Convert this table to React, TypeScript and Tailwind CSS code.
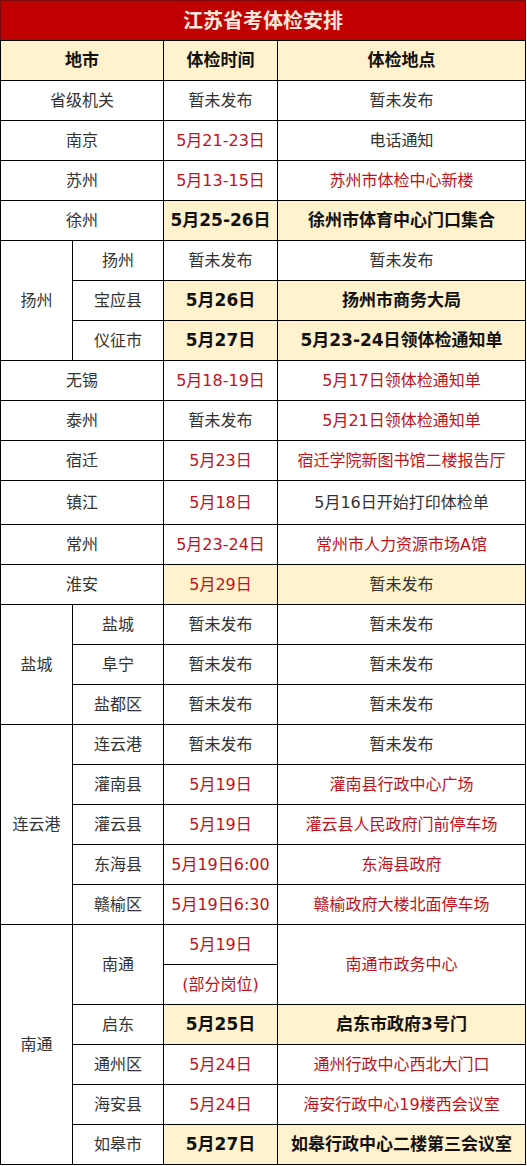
import React from 'react';

type Tone = 'gray' | 'red' | 'bold';

interface CellProps {
  children: React.ReactNode;
  tone?: Tone;
  hl?: boolean;
  className?: string;
}

function Cell({ children, tone = 'gray', hl = false, className = '' }: CellProps) {
  const toneClass =
    tone === 'red'
      ? 'text-[#c0121b] text-[16px]'
      : tone === 'bold'
        ? 'text-[#111111] text-[17px] font-bold'
        : 'text-[#333333] text-[16px]';
  return (
    <div
      className={`flex items-center justify-center whitespace-nowrap leading-none ${
        hl ? 'bg-[#fff2cc]' : 'bg-white'
      } ${toneClass} ${className}`}
    >
      {children}
    </div>
  );
}

// single-line city row: city spans both left columns
function CityRow({
  city,
  time,
  place,
  h = 'h-[39px]',
}: {
  city: string;
  time: CellProps;
  place: CellProps;
  h?: string;
}) {
  return (
    <>
      <Cell className={`col-span-2 ${h}`}>{city}</Cell>
      <Cell tone={time.tone} hl={time.hl} className={h}>
        {time.children}
      </Cell>
      <Cell tone={place.tone} hl={place.hl} className={h}>
        {place.children}
      </Cell>
    </>
  );
}

function SubRow({ name, time, place }: { name: string; time: CellProps; place: CellProps }) {
  return (
    <>
      <Cell className="h-[39px]">{name}</Cell>
      <Cell tone={time.tone} hl={time.hl} className="h-[39px]">
        {time.children}
      </Cell>
      <Cell tone={place.tone} hl={place.hl} className="h-[39px]">
        {place.children}
      </Cell>
    </>
  );
}

const NA: CellProps = { children: '暂未发布' };

export default function App() {
  return (
    <div className="min-h-screen bg-white font-['DejaVu_Sans','Noto_Sans_CJK_SC',sans-serif]">
      <div className="w-[526px]">
        {/* Title */}
        <div className="flex h-[40px] items-center justify-center border-x border-t border-[#7a0a0a] bg-[#c00000] text-[20px] font-bold text-[#fde6dc]">
          江苏省考体检安排
        </div>

        <div className="grid grid-cols-[71px_90px_113px_247px] gap-px bg-black p-px">
          {/* Header */}
          <Cell tone="bold" hl className="col-span-2 h-[39px] text-[#2a2418]">
            地市
          </Cell>
          <Cell tone="bold" hl className="h-[39px] text-[#2a2418]">
            体检时间
          </Cell>
          <Cell tone="bold" hl className="h-[39px] text-[#2a2418]">
            体检地点
          </Cell>

          <CityRow city="省级机关" time={NA} place={NA} />
          <CityRow city="南京" time={{ children: '5月21-23日', tone: 'red' }} place={{ children: '电话通知' }} />
          <CityRow
            city="苏州"
            time={{ children: '5月13-15日', tone: 'red' }}
            place={{ children: '苏州市体检中心新楼', tone: 'red' }}
          />
          <CityRow
            city="徐州"
            time={{ children: '5月25-26日', tone: 'bold', hl: true }}
            place={{ children: '徐州市体育中心门口集合', tone: 'bold', hl: true }}
          />

          {/* 扬州 */}
          <Cell className="row-span-3">扬州</Cell>
          <SubRow name="扬州" time={NA} place={NA} />
          <SubRow
            name="宝应县"
            time={{ children: '5月26日', tone: 'bold', hl: true }}
            place={{ children: '扬州市商务大局', tone: 'bold', hl: true }}
          />
          <SubRow
            name="仪征市"
            time={{ children: '5月27日', tone: 'bold', hl: true }}
            place={{ children: '5月23-24日领体检通知单', tone: 'bold', hl: true }}
          />

          <CityRow
            city="无锡"
            time={{ children: '5月18-19日', tone: 'red' }}
            place={{ children: '5月17日领体检通知单', tone: 'red' }}
          />
          <CityRow city="泰州" time={NA} place={{ children: '5月21日领体检通知单', tone: 'red' }} />
          <CityRow
            city="宿迁"
            time={{ children: '5月23日', tone: 'red' }}
            place={{ children: '宿迁学院新图书馆二楼报告厅', tone: 'red' }}
          />
          <CityRow
            city="镇江"
            h="h-[43px]"
            time={{ children: '5月18日', tone: 'red' }}
            place={{ children: '5月16日开始打印体检单' }}
          />
          <CityRow
            city="常州"
            time={{ children: '5月23-24日', tone: 'red' }}
            place={{ children: '常州市人力资源市场A馆', tone: 'red' }}
          />
          <CityRow
            city="淮安"
            time={{ children: '5月29日', tone: 'red', hl: true }}
            place={{ children: '暂未发布', hl: true }}
          />

          {/* 盐城 */}
          <Cell className="row-span-3">盐城</Cell>
          <SubRow name="盐城" time={NA} place={NA} />
          <SubRow name="阜宁" time={NA} place={NA} />
          <SubRow name="盐都区" time={NA} place={NA} />

          {/* 连云港 */}
          <Cell className="row-span-5">连云港</Cell>
          <SubRow name="连云港" time={NA} place={NA} />
          <SubRow
            name="灌南县"
            time={{ children: '5月19日', tone: 'red' }}
            place={{ children: '灌南县行政中心广场', tone: 'red' }}
          />
          <SubRow
            name="灌云县"
            time={{ children: '5月19日', tone: 'red' }}
            place={{ children: '灌云县人民政府门前停车场', tone: 'red' }}
          />
          <SubRow
            name="东海县"
            time={{ children: '5月19日6:00', tone: 'red' }}
            place={{ children: '东海县政府', tone: 'red' }}
          />
          <SubRow
            name="赣榆区"
            time={{ children: '5月19日6:30', tone: 'red' }}
            place={{ children: '赣榆政府大楼北面停车场', tone: 'red' }}
          />

          {/* 南通 */}
          <Cell className="row-span-6">南通</Cell>
          <Cell className="row-span-2">南通</Cell>
          <Cell tone="red" className="h-[39px]">
            5月19日
          </Cell>
          <Cell tone="red" className="row-span-2">
            南通市政务中心
          </Cell>
          <Cell tone="red" className="h-[39px]">
            (部分岗位)
          </Cell>
          <SubRow
            name="启东"
            time={{ children: '5月25日', tone: 'bold', hl: true }}
            place={{ children: '启东市政府3号门', tone: 'bold', hl: true }}
          />
          <SubRow
            name="通州区"
            time={{ children: '5月24日', tone: 'red' }}
            place={{ children: '通州行政中心西北大门口', tone: 'red' }}
          />
          <SubRow
            name="海安县"
            time={{ children: '5月24日', tone: 'red' }}
            place={{ children: '海安行政中心19楼西会议室', tone: 'red' }}
          />
          <SubRow
            name="如皋市"
            time={{ children: '5月27日', tone: 'bold', hl: true }}
            place={{ children: '如皋行政中心二楼第三会议室', tone: 'bold', hl: true }}
          />
        </div>
      </div>
    </div>
  );
}
